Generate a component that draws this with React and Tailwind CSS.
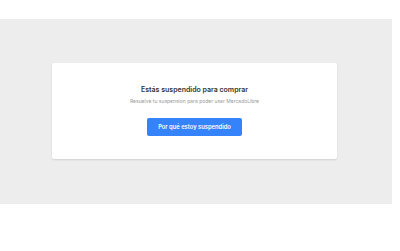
export default function App() {
  return (
    <div className="w-[400px] h-[251px] bg-white overflow-hidden" style={{ fontFamily: "Inter, 'Open Sans', sans-serif" }}>
      <div className="pt-[19px]">
        <div className="w-[392px] h-[185px] bg-[#ededed] pt-[44px] pl-[52px]">
          <div className="w-[285px] h-[96px] bg-white rounded-[2px] shadow-[0_1px_2px_rgba(0,0,0,0.12)] flex flex-col items-center pt-[22px]">
            <div className="text-[7px] leading-[10px] font-semibold text-[#333]">Estás suspendido para comprar</div>
            <div className="mt-[3px] text-[5px] leading-[7px] text-[#999]">Resuelve tu suspension para poder usar MercadoLibre</div>
            <div className="mt-[13px] w-[95px] h-[18px] bg-[#3483fa] rounded-[2px] flex items-center justify-center text-white text-[5.8px] font-semibold">Por qué estoy suspendido</div>
          </div>
        </div>
      </div>
    </div>
  );
}
